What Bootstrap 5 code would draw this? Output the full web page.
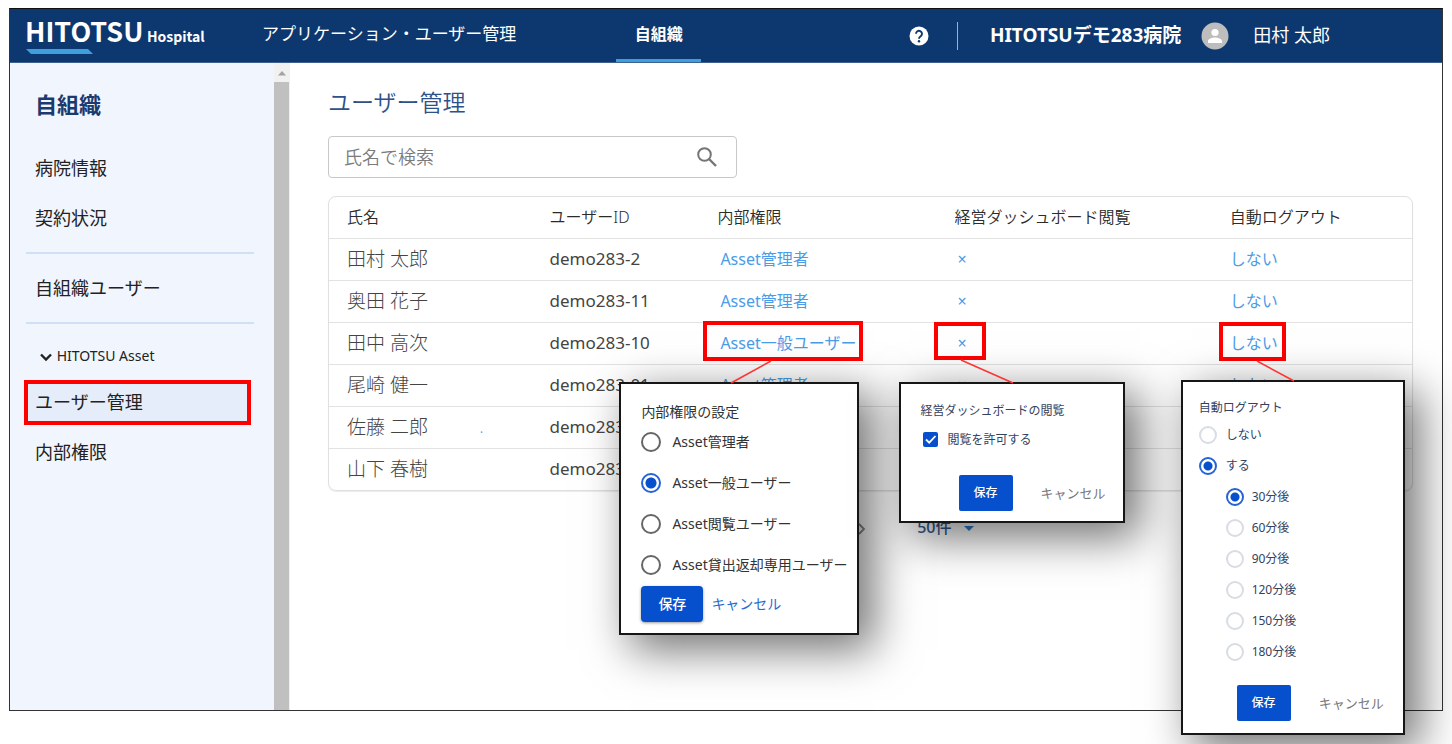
<!DOCTYPE html>
<html lang="ja">
<head>
<meta charset="utf-8">
<meta name="viewport" content="width=device-width, initial-scale=1">
<title>ユーザー管理 | HITOTSU Hospital</title>
<link href="https://cdn.jsdelivr.net/npm/bootstrap@5.3.0/dist/css/bootstrap.min.css" rel="stylesheet">
<style>
  :root { --navy: #0d386f; --save: #0650ce; --link: #4a9ce8; --mark: #fe0000; }
  body { font-family: "Noto Sans", "Noto Sans CJK JP", sans-serif; color: #2b2b2b; background: #fff; min-height: 100vh; padding: 8px 9px 33px; display: flex; flex-direction: column; }
  a { text-decoration: none; }
  .app-frame { flex: 1; border: 1px solid #333; border-top-color: #111; background: #fff; }

  /* top bar */
  .topbar { background: var(--navy); height: 54px; border-bottom: 1px solid #3d608f; padding: 0 112px 0 15px; }
  .brand { width: 237px; font-family: "Noto Sans CJK JP", sans-serif; font-weight: 700; color: #fff; line-height: 26px; white-space: nowrap; }
  .brand-main { font-size: 27px; }
  .brand-sub { font-size: 14px; }
  .brand svg { display: block; margin-left: 1px; }
  .topnav a { color: #fff; font-size: 17px; }
  .topnav .tab { width: 85px; margin-left: 100px; font-size: 16px; font-weight: 700; border-bottom: 3px solid #3e9fdc; }
  .rule-v { width: 1px; height: 28px; background: #9db0c8; margin: 0 32px 0 28px; }
  .clinic { font-size: 19px; font-weight: 700; color: #fff; margin-right: 20px; }
  .me { font-size: 18px; color: #fff; margin-left: 24px; }

  /* side menu */
  .side { width: 264px; flex: none; background: #f1f5fd; padding: 16px 20px 0 16px; }
  .side h2 { font-size: 22px; font-weight: 700; color: #1b3a70; line-height: 50px; margin: 0 0 14px; padding-left: 9px; }
  .side .item { display: block; font-size: 18px; line-height: 50px; color: #222; padding-left: 9px; }
  .side hr { margin: 9px 0; border-top: 2px solid #cfe0f7; opacity: 1; }
  .side .group { font-size: 14px; line-height: 46px; color: #222; background: none; border: 0; padding: 0 0 0 13px; display: block; }
  .side .current { line-height: 37px; border: 4px solid var(--mark); background: #e5edfa; margin: 1px 3px 2px -2px; padding-left: 7px; }
  .bar { width: 16px; flex: none; background: #f1f1f1; }
  .bar svg { display: block; }
  .thumb { flex: 1; margin: 0 1px 0 0; background: #c0c0c0; }

  /* content */
  .content { padding: 17px 29px 0 38px; min-width: 0; }
  .content h1 { font-size: 23px; font-weight: 350; color: #2d5288; line-height: 44px; margin: 0 0 12px; }
  .search { max-width: 409px; height: 42px; border: 1px solid #c8c8c8; border-radius: 4px; padding: 0 18px 0 13px; }
  .search input { border: 0; outline: 0; flex: 1; min-width: 0; font-size: 18px; font-weight: 350; background: none; }
  .search input::placeholder { color: #7b7b7b; }
  .grid-box { margin-top: 18px; border: 1px solid #e0e0e0; border-radius: 8px; box-shadow: 0 1px 1px rgba(0,0,0,.08); }
  .users { width: 100%; table-layout: fixed; font-size: 16px; }
  .users th, .users td { height: 42px; padding: 0 0 1px 18px; font-weight: 400; position: relative; white-space: nowrap; line-height: 24px; }
  .users td { border-top: 1px solid #e2e2e2; }
  .users th { height: 41px; font-weight: 350; }
  .users a { color: var(--link); }
  .users .lat a { padding-left: 3px; }
  .users .name { font-size: 19px; font-weight: 300; color: #444; }
  .users .uid { font-size: 17px; color: #444; }
  .c1 { width: 18.7%; } .c2 { width: 15.5%; } .c3 { width: 21.9%; } .c4 { width: 25.4%; } .c5 { width: 18.5%; }
  .pager { margin: 24px 0 0 48.4%; font-size: 16px; }
  .pager button { border: 0; background: none; padding: 0; color: #31588f; font-weight: 500; }

  /* highlights, leader lines and dialogs over the table */
  .hl { position: absolute; border: 4px solid var(--mark); pointer-events: none; z-index: 2; }
  .lead-line { position: absolute; z-index: 6; overflow: visible; }
  .dlg { position: absolute; z-index: 5; background: #fff; border: 2px solid #161616; box-shadow: 13px 13px 42px 2px rgba(0,0,0,.55); color: #333; }
  .dlg h3 { font-weight: 400; line-height: 20px; margin: 0; }
  .dlg label { display: flex; align-items: center; }
  .dlg input { flex: none; margin: 0; appearance: none; background: #fff; }
  .dlg input[type=radio] { border: 2px solid #d8dce3; border-radius: 50%; width: 18px; height: 18px; }
  .dlg input[type=radio]:checked { border-color: #2663d6; background: radial-gradient(circle, var(--save) 0 4px, #fff 5px); }
  .dlg .save { background: var(--save); color: #fff; border: 0; height: 36px; padding: 0; font-weight: 500; }
  .dlg .cancel { background: none; border: 0; padding: 0; }
  .dlg-role { left: -80px; top: 59px; width: 240px; padding: 18px 0 11px 20px; font-size: 14px; }
  .dlg-role h3 { font-size: 14px; }
  .dlg-role label { height: 41px; gap: 11px; }
  .dlg-role input[type=radio] { width: 20px; height: 20px; border-color: #666; }
  .dlg-role input[type=radio]:checked { background: radial-gradient(circle, var(--save) 0 5px, #fff 6px); }
  .dlg-role .save { width: 62px; border-radius: 4px; box-shadow: 0 1px 3px rgba(0,0,0,.4); }
  .dlg-role .cancel { color: #2a6bd0; }
  .dlg-board { left: -38px; top: 59px; width: 226px; padding: 17px 0 10px 20px; font-size: 12px; color: #34425e; }
  .dlg-board h3, .dlg-logout h3 { font-size: 12px; }
  .dlg-board label { height: 38px; gap: 10px; padding-left: 2px; }
  .dlg-board input { width: 15px; height: 15px; border-radius: 2px; background: var(--save); }
  .dlg-board .tick { position: relative; display: inline-flex; }
  .dlg-board .tick svg { position: absolute; inset: 0; }
  .dlg-board .acts { margin: 16px 0 0 38px; gap: 28px; }
  .dlg-board .save, .dlg-logout .save { width: 54px; border-radius: 2px; }
  .dlg-board .cancel, .dlg-logout .cancel { font-size: 13px; color: #777; }
  .dlg-logout { left: -31px; top: 57px; width: 224px; padding: 16px 0 12px 16px; font-size: 12px; color: #34425e; }
  .dlg-logout h3 { margin-bottom: 2px; }
  .dlg-logout label { height: 31px; gap: 9px; }
  .dlg-logout .sub { margin-left: 27px; }
  .dlg-logout .sub label { gap: 8px; }
  .dlg-logout .acts { margin: 17px 0 0 38px; gap: 28px; }
</style>
</head>
<body>
<div class="app-frame d-flex flex-column">
  <header class="topbar d-flex align-items-stretch">
    <a class="brand align-self-center" href="#"><span class="brand-main">HITOTSU</span> <span class="brand-sub">Hospital</span>
      <svg width="67" height="5" viewBox="0 0 67 5" aria-hidden="true"><path fill="#3e9fdc" d="M0 0h62l5 5H5z"/></svg>
    </a>
    <nav class="topnav d-flex">
      <a class="d-flex align-items-center pb-1" href="#">アプリケーション・ユーザー管理</a>
      <a class="tab d-flex align-items-center justify-content-center" href="#" aria-current="page">自組織</a>
    </nav>
    <div class="ms-auto d-flex align-items-center">
      <button class="btn p-0 border-0 d-flex" type="button" aria-label="ヘルプ">
        <svg width="20" height="20" viewBox="0 0 20 20"><circle cx="10" cy="10" r="9.5" fill="#fff"/><path d="M7 7.8a3 3 0 1 1 4.9 2.3c-1.1.9-1.9 1.2-1.9 2.6" fill="none" stroke="#0d386f" stroke-width="1.9"/><circle cx="10" cy="15.2" r="1.2" fill="#0d386f"/></svg>
      </button>
      <div class="rule-v"></div>
      <span class="clinic">HITOTSUデモ283病院</span>
      <svg width="28" height="28" viewBox="0 0 28 28" aria-hidden="true"><circle cx="14" cy="14" r="13.500" fill="#bdbdbd"/><circle cx="14" cy="10.500" r="3.600" fill="#fff"/><path fill="#fff" d="M7 21v-2c0-2.400 4.600-3.600 7-3.600s7 1.200 7 3.600v2z"/></svg>
      <span class="me">田村 太郎</span>
    </div>
  </header>

  <div class="d-flex flex-grow-1">
    <aside class="side">
      <h2>自組織</h2>
      <a class="item" href="#">病院情報</a>
      <a class="item" href="#">契約状況</a>
      <hr>
      <a class="item" href="#">自組織ユーザー</a>
      <hr>
      <button class="group" type="button"><svg width="14" height="10" viewBox="0 0 14 10" aria-hidden="true"><path d="M2 2.500l5 5 5-5" fill="none" stroke="#222" stroke-width="2.400"/></svg> HITOTSU Asset</button>
      <a class="item current" href="#" aria-current="page">ユーザー管理</a>
      <a class="item" href="#">内部権限</a>
    </aside>
    <div class="bar d-flex flex-column" aria-hidden="true">
      <svg width="16" height="19" viewBox="0 0 16 19"><path d="M4 12.500l4-4.500 4 4.500z" fill="#a3a3a3"/></svg>
      <div class="thumb"></div>
    </div>

    <main class="content flex-grow-1">
      <h1>ユーザー管理</h1>
      <div class="search d-flex align-items-center">
        <input type="text" placeholder="氏名で検索" aria-label="氏名で検索">
        <svg width="22" height="22" viewBox="0 0 22 22" aria-hidden="true"><circle cx="8.500" cy="8.500" r="6.300" fill="none" stroke="#757575" stroke-width="2"/><path d="M13 13l7 7" stroke="#757575" stroke-width="2.400"/></svg>
      </div>

      <div class="grid-box">
        <table class="users">
          <colgroup><col class="c1"><col class="c2"><col class="c3"><col class="c4"><col class="c5"></colgroup>
          <thead>
            <tr><th>氏名</th><th>ユーザーID</th><th>内部権限</th><th>経営ダッシュボード閲覧</th><th>自動ログアウト</th></tr>
          </thead>
          <tbody>
            <tr><td class="name">田村 太郎</td><td class="uid">demo283-2</td><td class="lat"><a href="#">Asset管理者</a></td><td class="lat"><a href="#">×</a></td><td><a href="#">しない</a></td></tr>
            <tr><td class="name">奥田 花子</td><td class="uid">demo283-11</td><td class="lat"><a href="#">Asset管理者</a></td><td class="lat"><a href="#">×</a></td><td><a href="#">しない</a></td></tr>
            <tr>
              <td class="name">田中 高次</td>
              <td class="uid">demo283-10</td>
              <td class="lat"><a href="#">Asset一般ユーザー</a>
                <span class="hl" style="left:4px;top:-2px;width:160px;height:40px"></span>
                <svg class="lead-line" style="left:32px;top:38px" width="40" height="22" aria-hidden="true"><path d="M40 0L0 22" stroke="#f33" stroke-width="1.500"/></svg>
                <form class="dlg dlg-role">
                  <h3>内部権限の設定</h3>
                  <label><input type="radio" name="role">Asset管理者</label>
                  <label><input type="radio" name="role" checked>Asset一般ユーザー</label>
                  <label><input type="radio" name="role">Asset閲覧ユーザー</label>
                  <label><input type="radio" name="role">Asset貸出返却専用ユーザー</label>
                  <div class="d-flex gap-2"><button type="button" class="save">保存</button><button type="button" class="cancel">キャンセル</button></div>
                </form>
              </td>
              <td class="lat"><a href="#">×</a>
                <span class="hl" style="left:-3px;top:-1px;width:52px;height:38px"></span>
                <svg class="lead-line" style="left:24px;top:37px" width="52" height="23" aria-hidden="true"><path d="M0 0L52 23" stroke="#f33" stroke-width="1.500"/></svg>
                <form class="dlg dlg-board">
                  <h3>経営ダッシュボードの閲覧</h3>
                  <label><span class="tick"><input type="checkbox" checked><svg width="15" height="15" viewBox="0 0 15 15" aria-hidden="true"><path d="M3 7.500l3.200 3.200L12.500 4" fill="none" stroke="#fff" stroke-width="1.800"/></svg></span>閲覧を許可する</label>
                  <div class="acts d-flex"><button type="button" class="save">保存</button><button type="button" class="cancel">キャンセル</button></div>
                </form>
              </td>
              <td><a href="#">しない</a>
                <span class="hl" style="left:7px;top:-1px;width:67px;height:39px"></span>
                <svg class="lead-line" style="left:45px;top:38px" width="37" height="20" aria-hidden="true"><path d="M0 0L37 20" stroke="#f33" stroke-width="1.500"/></svg>
                <form class="dlg dlg-logout">
                  <h3>自動ログアウト</h3>
                  <label><input type="radio" name="auto">しない</label>
                  <label><input type="radio" name="auto" checked>する</label>
                  <div class="sub">
                    <label><input type="radio" name="min" checked>30分後</label>
                    <label><input type="radio" name="min">60分後</label>
                    <label><input type="radio" name="min">90分後</label>
                    <label><input type="radio" name="min">120分後</label>
                    <label><input type="radio" name="min">150分後</label>
                    <label><input type="radio" name="min">180分後</label>
                  </div>
                  <div class="acts d-flex"><button type="button" class="save">保存</button><button type="button" class="cancel">キャンセル</button></div>
                </form>
              </td>
            </tr>
            <tr><td class="name">尾崎 健一</td><td class="uid">demo283-01</td><td class="lat"><a href="#">Asset管理者</a></td><td class="lat"><a href="#">×</a></td><td><a href="#">しない</a></td></tr>
            <tr><td class="name"><span class="d-flex justify-content-between pe-5">佐藤 二郎<a class="fs-6" href="#">.</a></span></td><td class="uid">demo283</td><td></td><td></td><td></td></tr>
            <tr><td class="name">山下 春樹</td><td class="uid">demo283</td><td></td><td></td><td></td></tr>
          </tbody>
        </table>
      </div>

      <div class="pager d-flex align-items-center">
        <button type="button" aria-label="次へ"><svg width="16" height="16" viewBox="0 0 16 16"><path d="M6 3l5 5-5 5" fill="none" stroke="#888" stroke-width="1.800"/></svg></button>
        <button type="button" class="ms-5">50件 <svg class="ms-2" width="10" height="6" viewBox="0 0 10 6" aria-hidden="true"><path d="M0 0h10L5 5z" fill="#2f7ed0"/></svg></button>
      </div>
    </main>
  </div>
</div>
<script src="https://cdn.jsdelivr.net/npm/bootstrap@5.3.0/dist/js/bootstrap.bundle.min.js"></script>
</body>
</html>
